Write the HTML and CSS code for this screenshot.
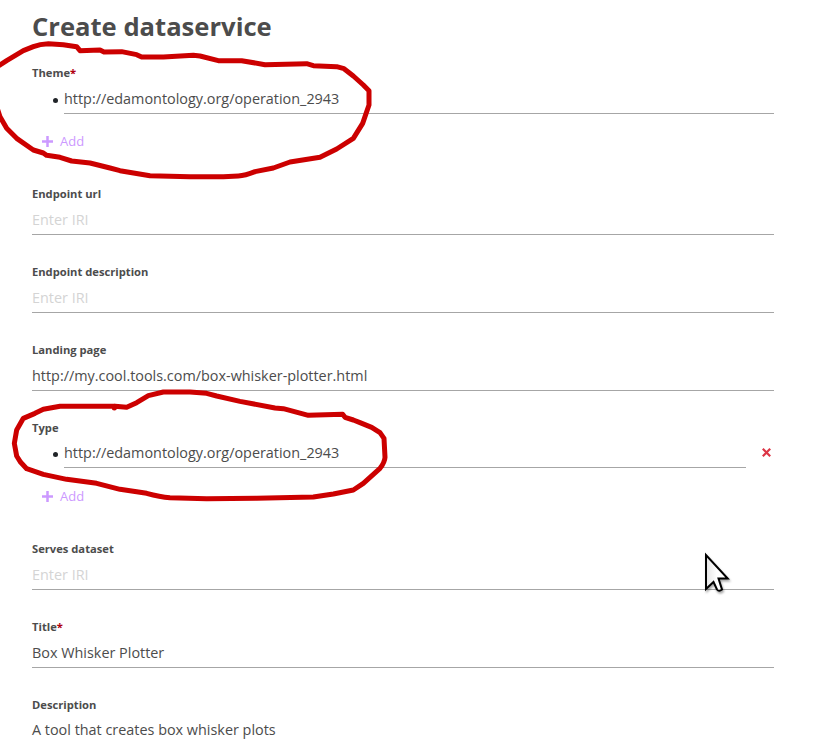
FILE: index.html
```html
<!DOCTYPE html>
<html lang="en">
<head>
<meta charset="utf-8">
<title>Create dataservice</title>
<link rel="stylesheet" href="styles.css">
</head>
<body>
<main class="form">
  <h1>Create dataservice</h1>
  <section class="field">
    <h2 class="label">Theme<span class="required">*</span></h2>
    <ul class="values"><li class="item"><div class="control">http://edamontology.org/operation_2943</div></li></ul>
    <div class="add"><svg class="plus" viewBox="0 0 11 11"><path d="M5.500 0v11M0 5.500h11"/></svg>Add</div>
  </section>
  <section class="field">
    <h2 class="label">Endpoint url</h2>
    <div class="control placeholder">Enter IRI</div>
  </section>
  <section class="field">
    <h2 class="label">Endpoint description</h2>
    <div class="control placeholder">Enter IRI</div>
  </section>
  <section class="field">
    <h2 class="label">Landing page</h2>
    <div class="control">http://my.cool.tools.com/box-whisker-plotter.html</div>
  </section>
  <section class="field removable">
    <h2 class="label">Type</h2>
    <ul class="values"><li class="item"><div class="control">http://edamontology.org/operation_2943</div><svg class="remove" viewBox="0 0 9 9"><path d="M.8.8l7.400 7.400M8.200.8l-7.400 7.400"/></svg></li></ul>
    <div class="add"><svg class="plus" viewBox="0 0 11 11"><path d="M5.500 0v11M0 5.500h11"/></svg>Add</div>
  </section>
  <section class="field">
    <h2 class="label">Serves dataset</h2>
    <div class="control placeholder">Enter IRI</div>
  </section>
  <section class="field">
    <h2 class="label">Title<span class="required">*</span></h2>
    <div class="control">Box Whisker Plotter</div>
  </section>
  <section class="field last">
    <h2 class="label">Description</h2>
    <div class="control">A tool that creates box whisker plots</div>
  </section>
</main>
<svg class="markup" viewBox="0 0 2466 2256">
  <path class="ink" d="M-10 200L0 195L20 182L70 152L100 140Q120 132 145 131L190 134L230 140L240 152L300 150L312 156L365 155L410 164L425 171L490 171L580 166L600 168L655 182L725 182L795 194L920 191L940 197L1010 200L1032 206L1060 228L1090 255L1107 272V315L1088 370L1060 415L1010 447L960 472L870 486L820 504L765 515Q735 527 715 528L670 530H570L450 527L360 512L330 504L270 489L215 483L180 472L140 466L130 459L100 450L50 415L20 385L0 350L-10 320"/>
  <path class="ink" d="M343 1224V1219H180L130 1228L105 1240L70 1255L50 1290L43 1330L50 1368L62 1387L80 1406L130 1423L200 1438L290 1450L360 1468L440 1480Q480 1491 510 1493L620 1496L770 1495L940 1491L1000 1482L1060 1470L1090 1450L1140 1405Q1154 1387 1155 1372L1152 1315L1140 1298L1115 1282L1080 1268L1060 1260L1035 1252L1028 1243L925 1246L850 1226L825 1224L720 1204L650 1188L620 1180L570 1176H490L445 1187L410 1208L380 1222L345 1219"/>
</svg>
<svg class="pointer" viewBox="0 0 34 46">
  <defs><linearGradient id="shade"><stop offset="0" stop-color="#e4e4e4"/><stop offset=".5" stop-color="#fff"/></linearGradient></defs>
  <path d="M4 4V38L11.500 31L15 38.500Q17 41 20 38.500L16.500 27.500H25.700Z"/>
</svg>
</body>
</html>
```

FILE: styles.css
```css
* { box-sizing: border-box; }
body {
  margin: 0;
  height: 752px;
  overflow: hidden;
  position: relative;
  background: #fff;
  color: #4c4c4c;
  font: 14.4px/20px "Open Sans", sans-serif;
}
.form { width: 774px; padding: 9px 0 0 32px; }
h1 { margin: 0 0 20px; font-size: 25.6px; line-height: 36px; font-weight: 700; }
.field { margin-bottom: 29px; }
.label { margin: 0; font-size: 11.2px; line-height: 16px; font-weight: 700; }
.required { color: #b00010; }
.control {
  flex: 1;
  height: 33px;
  padding-top: 8px;
  border-bottom: 1px solid #a6a6a6;
}
.placeholder { color: #d4d4d4; }
.values { list-style: none; margin: 0; padding: 0 0 0 20px; }
.item { display: flex; align-items: center; }
.item::before {
  content: "";
  width: 5px;
  height: 5px;
  margin: 5px 6px 0 1px;
  border-radius: 50%;
  background: #202428;
}
.add {
  display: flex;
  align-items: center;
  gap: 7px;
  height: 20px;
  margin: 17px 0 35px 10px;
  font-size: 13px;
  color: #cc99ff;
}
.plus { width: 11px; height: 11px; fill: none; stroke: #cc99ff; stroke-width: 2.5; }
.removable .control { height: 32px; padding-top: 7px; }
.removable .add { margin-top: 18px; }
.remove { width: 9px; height: 9px; margin: 0 3px 0 16px; fill: none; stroke: #dc3545; stroke-width: 2.2; }
.last { margin: 0; }
.last .control { padding-top: 7px; border-bottom: 0; }
.markup { position: absolute; left: 0; top: 0; width: 822px; height: 752px; }
.ink { fill: none; stroke: #c00; stroke-width: 15; stroke-linecap: round; stroke-linejoin: round; }
.pointer {
  position: absolute;
  left: 702px;
  top: 551px;
  width: 34px;
  height: 46px;
  filter: drop-shadow(1px 2px 1px rgba(0, 0, 0, .35));
}
.pointer path { fill: url(#shade); stroke: #000; stroke-width: 2; }
```
